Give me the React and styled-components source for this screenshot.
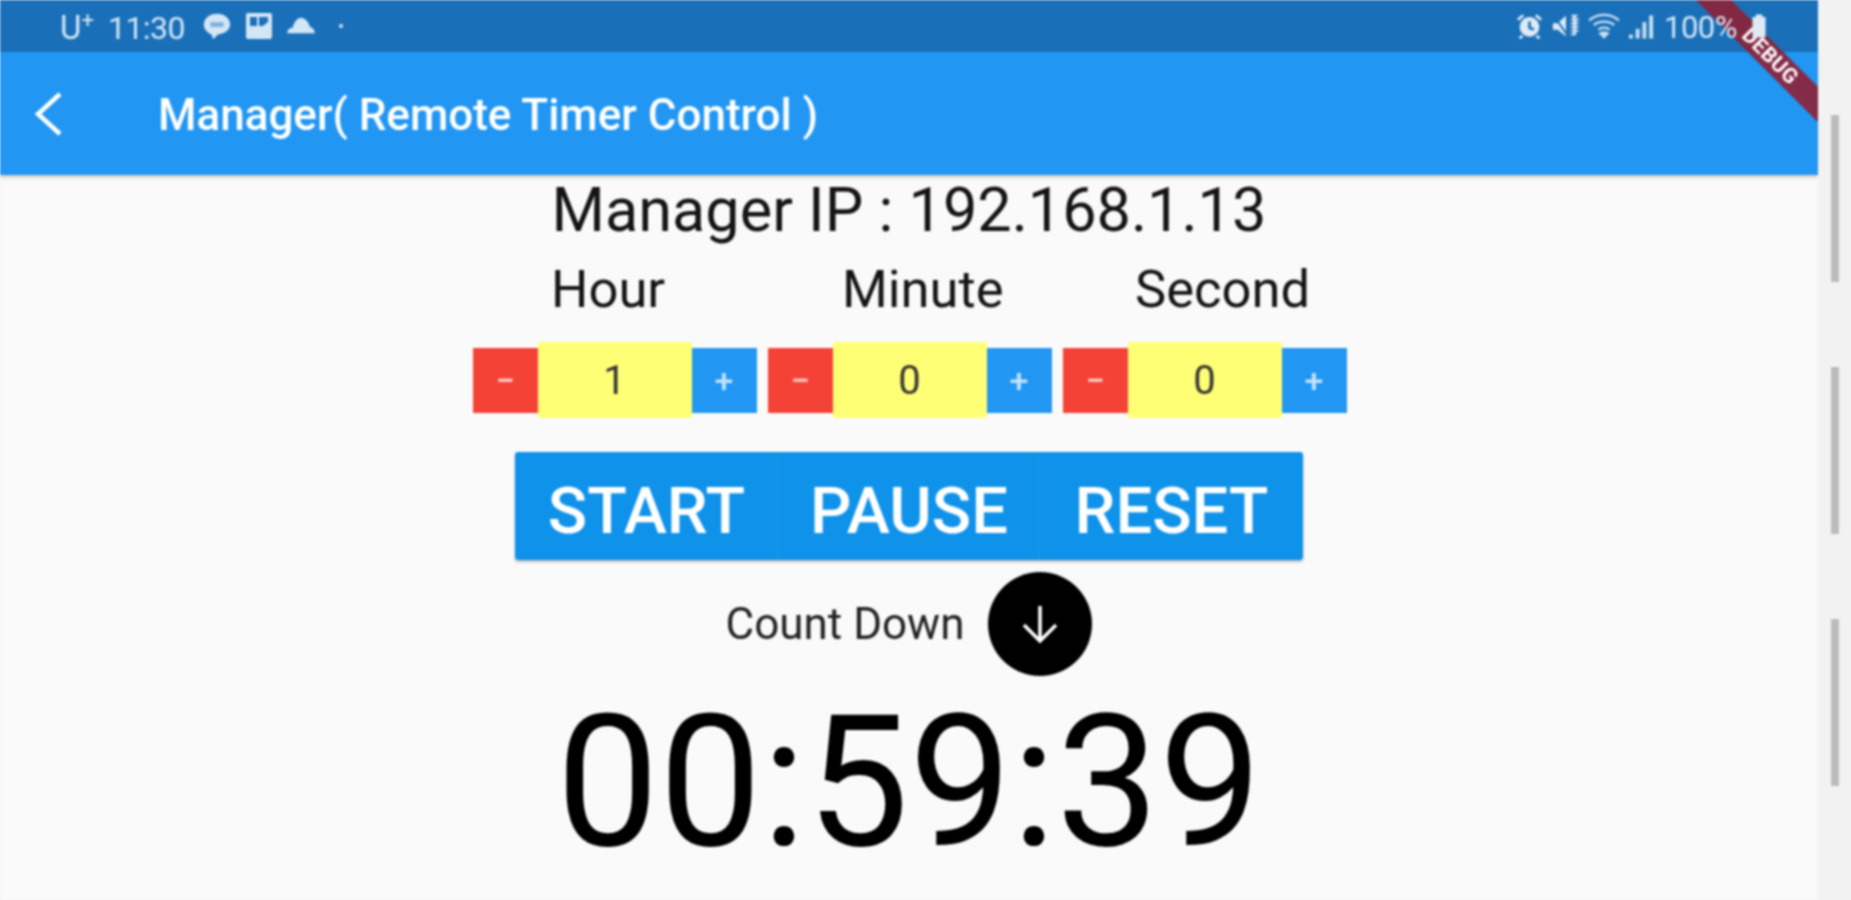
import React from "react";
import styled, { createGlobalStyle } from "styled-components";

const Global = createGlobalStyle`
  html, body { margin: 0; padding: 0; background: #f2f2f2; overflow: hidden; }
  body { font-family: Roboto, "Liberation Sans", sans-serif; }
`;
const Page = styled.div`
  display: flex; width: 1851px; height: 900px; overflow: hidden; filter: blur(0.9px);
`;
const Screen = styled.div`
  position: relative; display: flex; flex-direction: column; width: 1818px; height: 900px;
  background: #fafafa; overflow: hidden;
`;
const Rail = styled.div`
  flex: 1; display: flex; flex-direction: column; align-items: flex-start; gap: 85px;
  padding: 115px 0 0 13px; background: #f2f2f2; box-sizing: border-box;
`;
const Thumb = styled.div` width: 8px; height: 167px; background: #bcbcbc; `;
const StatusBar = styled.div`
  height: 52px; flex: none; display: flex; align-items: center; justify-content: space-between;
  background: #1a70b8; color: #d3e6f6; padding: 0 50px 0 60px; box-sizing: border-box;
`;
const StatusGroup = styled.div`
  position: relative; z-index: ${p => p.$z || 0};
  display: flex; align-items: center; gap: ${p => p.$gap || 8}px;
`;
const StatusText = styled.span`
  font-size: ${p => p.$size || 31}px; line-height: 52px; letter-spacing: -0.5px; padding-top: 3px;
  margin-right: ${p => p.$after || 0}px;
`;
const Carrier = styled.span`
  font-size: 33px; line-height: 52px; padding-top: 3px; margin-right: 1px;
  sup { font-size: 22px; line-height: 0; vertical-align: 11px; }
`;
const AppBar = styled.header`
  height: 123px; flex: none; display: flex; align-items: center; background: #2196f3; color: #fff;
  padding: 0 0 0 34px; box-sizing: border-box; box-shadow: 0 2px 4px rgba(0,0,0,.22); z-index: 1;
`;
const Title = styled.h1`
  margin: 0 0 0 94px; padding-top: 2px; font-size: 44px; font-weight: 500; line-height: 60px; white-space: nowrap;
`;
const Ribbon = styled.div`
  position: absolute; top: 44px; right: -72px; width: 240px; height: 25px; line-height: 25px;
  transform: rotate(45deg); background: rgba(140, 34, 58, .93); color: #fff; text-align: center;
  font-size: 21px; font-weight: 700; letter-spacing: .5px; z-index: 2;
`;
const Content = styled.main`
  flex: 1; display: flex; flex-direction: column; align-items: center; color: #141414;
`;
const IpText = styled.div` font-size: 61.2px; line-height: 70px; white-space: nowrap; `;
const LabelRow = styled.div`
  display: grid; grid-template-columns: 291px 293px 1fr; width: 878px; box-sizing: border-box;
  padding-left: 81px; margin-top: 14px;
`;
const UnitLabel = styled.div` font-size: 52.500px; line-height: 60px; `;
const Steppers = styled.div`
  display: flex; gap: 11px; margin-top: 23px; padding-left: 1px; align-items: center;
`;
const Stepper = styled.div` display: flex; align-items: center; `;
const StepButton = styled.div`
  width: 65px; height: 65px; display: flex; align-items: center; justify-content: center;
  background: ${p => p.$bg}; color: rgba(255,255,255,.72); font-size: 34px; font-weight: 500;
`;
const StepValue = styled.div`
  width: 154px; height: 76px; display: flex; align-items: center; justify-content: center;
  background: #ffff76; border-radius: 2px; font-size: 40px; color: #333;
`;
const Actions = styled.div`
  display: flex; width: 788px; height: 108px; margin-top: 34px;
  box-shadow: 0 2px 3px rgba(0,0,0,.25); border-radius: 3px; overflow: hidden;
`;
const Action = styled.div`
  flex: none; width: ${p => p.$w}px; box-sizing: border-box; display: flex; align-items: center; justify-content: center;
  background: #0f92e9; color: #fff; font-size: 65px; font-weight: 500; padding-top: 10px;
  & + & { border-left: 1px solid #1c98ea; }
`;
const ModeRow = styled.div`
  display: flex; align-items: center; gap: 24px; margin-top: 12px;
`;
const ModeText = styled.div` font-size: 44px; line-height: 50px; color: #222; `;
const ModeButton = styled.div`
  width: 104px; height: 104px; border-radius: 50%; background: #000; display: flex;
  align-items: center; justify-content: center;
`;
const Timer = styled.div`
  font-size: 183px; line-height: 200px; color: #000; white-space: nowrap; margin-top: 7px;
`;

const Talk = () => (
  <svg width="30" height="32" viewBox="0 0 32 32" fill="#d3e6f6">
    <path d="M16 3C8 3 2 8 2 14.500c0 5 3.500 8.700 8 10.500L12 30l5-5c7.500-.5 13-5 13-10.500C30 8 24 3 16 3z" />
    <rect x="9" y="12" width="14" height="5" fill="#7fb0da" />
  </svg>
);
const Gallery = () => (
  <svg width="28" height="28" viewBox="0 0 28 28">
    <rect x="1" y="1" width="26" height="26" rx="2" fill="#d3e6f6" />
    <rect x="5" y="5" width="7" height="9" fill="#1a70b8" />
    <path d="M14 5h9v5l-5 4h-4z" fill="#1a70b8" />
  </svg>
);
const Cloud = () => (
  <svg width="30" height="22" viewBox="0 0 32 24" fill="#d3e6f6">
    <path d="M1 20c0-4 3-6 6-6 1-6 5-11 9-11s8 4 10 10c3 1 5 3 5 7z" />
  </svg>
);
const Dot = () => (
  <svg width="22" height="6" viewBox="0 0 22 6" fill="#d3e6f6"><circle cx="12" cy="3" r="2" /></svg>
);
const Alarm = () => (
  <svg width="25" height="26" viewBox="0 0 28 28">
    <circle cx="14" cy="15" r="11" fill="#dfeaf5" />
    <path d="M14 9v7l5 2" stroke="#1a70b8" strokeWidth="3" fill="none" />
    <path d="M1 7l6-5M27 7l-6-5M6 25l-3 3M22 25l3 3" stroke="#dfeaf5" strokeWidth="3" />
  </svg>
);
const Mute = () => (
  <svg width="28" height="26" viewBox="0 0 30 28" fill="#dfeaf5">
    <path d="M2 11h5l9-8v22l-9-7H2z" />
    <path d="M3 3l16 23" stroke="#1a70b8" strokeWidth="2" />
    <path d="M22 3h5l-4 4h5l-5 4h5l-5 4h5l-5 4h5l-5 4h4" stroke="#dfeaf5" strokeWidth="2" fill="none" />
  </svg>
);
const Wifi = () => (
  <svg width="32" height="26" viewBox="0 0 34 28" fill="none" stroke="#c9dff2" strokeWidth="2.500">
    <path d="M1 8c9-8 23-8 32 0M6 13c6-5 16-5 22 0M11 18c3-3 9-3 12 0" />
    <path d="M17 26l-4-4c2-1 6-1 8 0z" fill="#c9dff2" />
  </svg>
);
const Signal = () => (
  <svg width="26" height="28" viewBox="0 0 27 28" fill="#c9dff2">
    <rect x="0" y="23" width="4" height="4" />
    <rect x="7" y="17" width="4" height="10" />
    <rect x="14" y="10" width="4" height="17" />
    <rect x="21" y="3" width="4" height="24" />
  </svg>
);
const Battery = () => (
  <svg width="18" height="28" viewBox="0 0 22 30" fill="#dfeaf5">
    <path d="M7 1h8v3h4v25H3V4h4z" />
  </svg>
);
const Back = () => (
  <svg width="30" height="44" viewBox="0 0 30 44" fill="none" stroke="#fff" strokeWidth="4.500">
    <path d="M26 2L4 22l22 20" />
  </svg>
);
const ArrowDown = () => (
  <svg width="44" height="44" viewBox="0 0 44 44" fill="none" stroke="#fff" strokeWidth="3.500">
    <path d="M22 4v34M6 23l16 16 16-16" />
  </svg>
);

const units = ["1", "0", "0"];

export default function App() {
  return (
    <>
      <Global />
      <Page>
        <Screen>
          <StatusBar>
            <StatusGroup $gap={13}>
              <Carrier>U<sup>+</sup></Carrier>
              <StatusText $size={32} $after={4}>11:30</StatusText>
              <Talk />
              <Gallery />
              <Cloud />
              <Dot />
            </StatusGroup>
            <StatusGroup $gap={9} $z={3}>
              <Alarm />
              <Mute />
              <Wifi />
              <Signal />
              <StatusText $after={4}>100%</StatusText>
              <Battery />
            </StatusGroup>
          </StatusBar>
          <AppBar>
            <Back />
            <Title>Manager( Remote Timer Control )</Title>
          </AppBar>
          <Ribbon>DEBUG</Ribbon>
          <Content>
            <IpText>Manager IP : 192.168.1.13</IpText>
            <LabelRow>
              <UnitLabel>Hour</UnitLabel>
              <UnitLabel>Minute</UnitLabel>
              <UnitLabel>Second</UnitLabel>
            </LabelRow>
            <Steppers>
              {units.map((v, i) => (
                <Stepper key={i}>
                  <StepButton $bg="#f44336">−</StepButton>
                  <StepValue>{v}</StepValue>
                  <StepButton $bg="#2196f3">+</StepButton>
                </Stepper>
              ))}
            </Steppers>
            <Actions>
              <Action $w={263}>START</Action>
              <Action $w={261}>PAUSE</Action>
              <Action $w={264}>RESET</Action>
            </Actions>
            <ModeRow>
              <ModeText>Count Down</ModeText>
              <ModeButton><ArrowDown /></ModeButton>
            </ModeRow>
            <Timer>00:59:39</Timer>
          </Content>
        </Screen>
        <Rail>
          <Thumb /><Thumb /><Thumb />
        </Rail>
      </Page>
    </>
  );
}
